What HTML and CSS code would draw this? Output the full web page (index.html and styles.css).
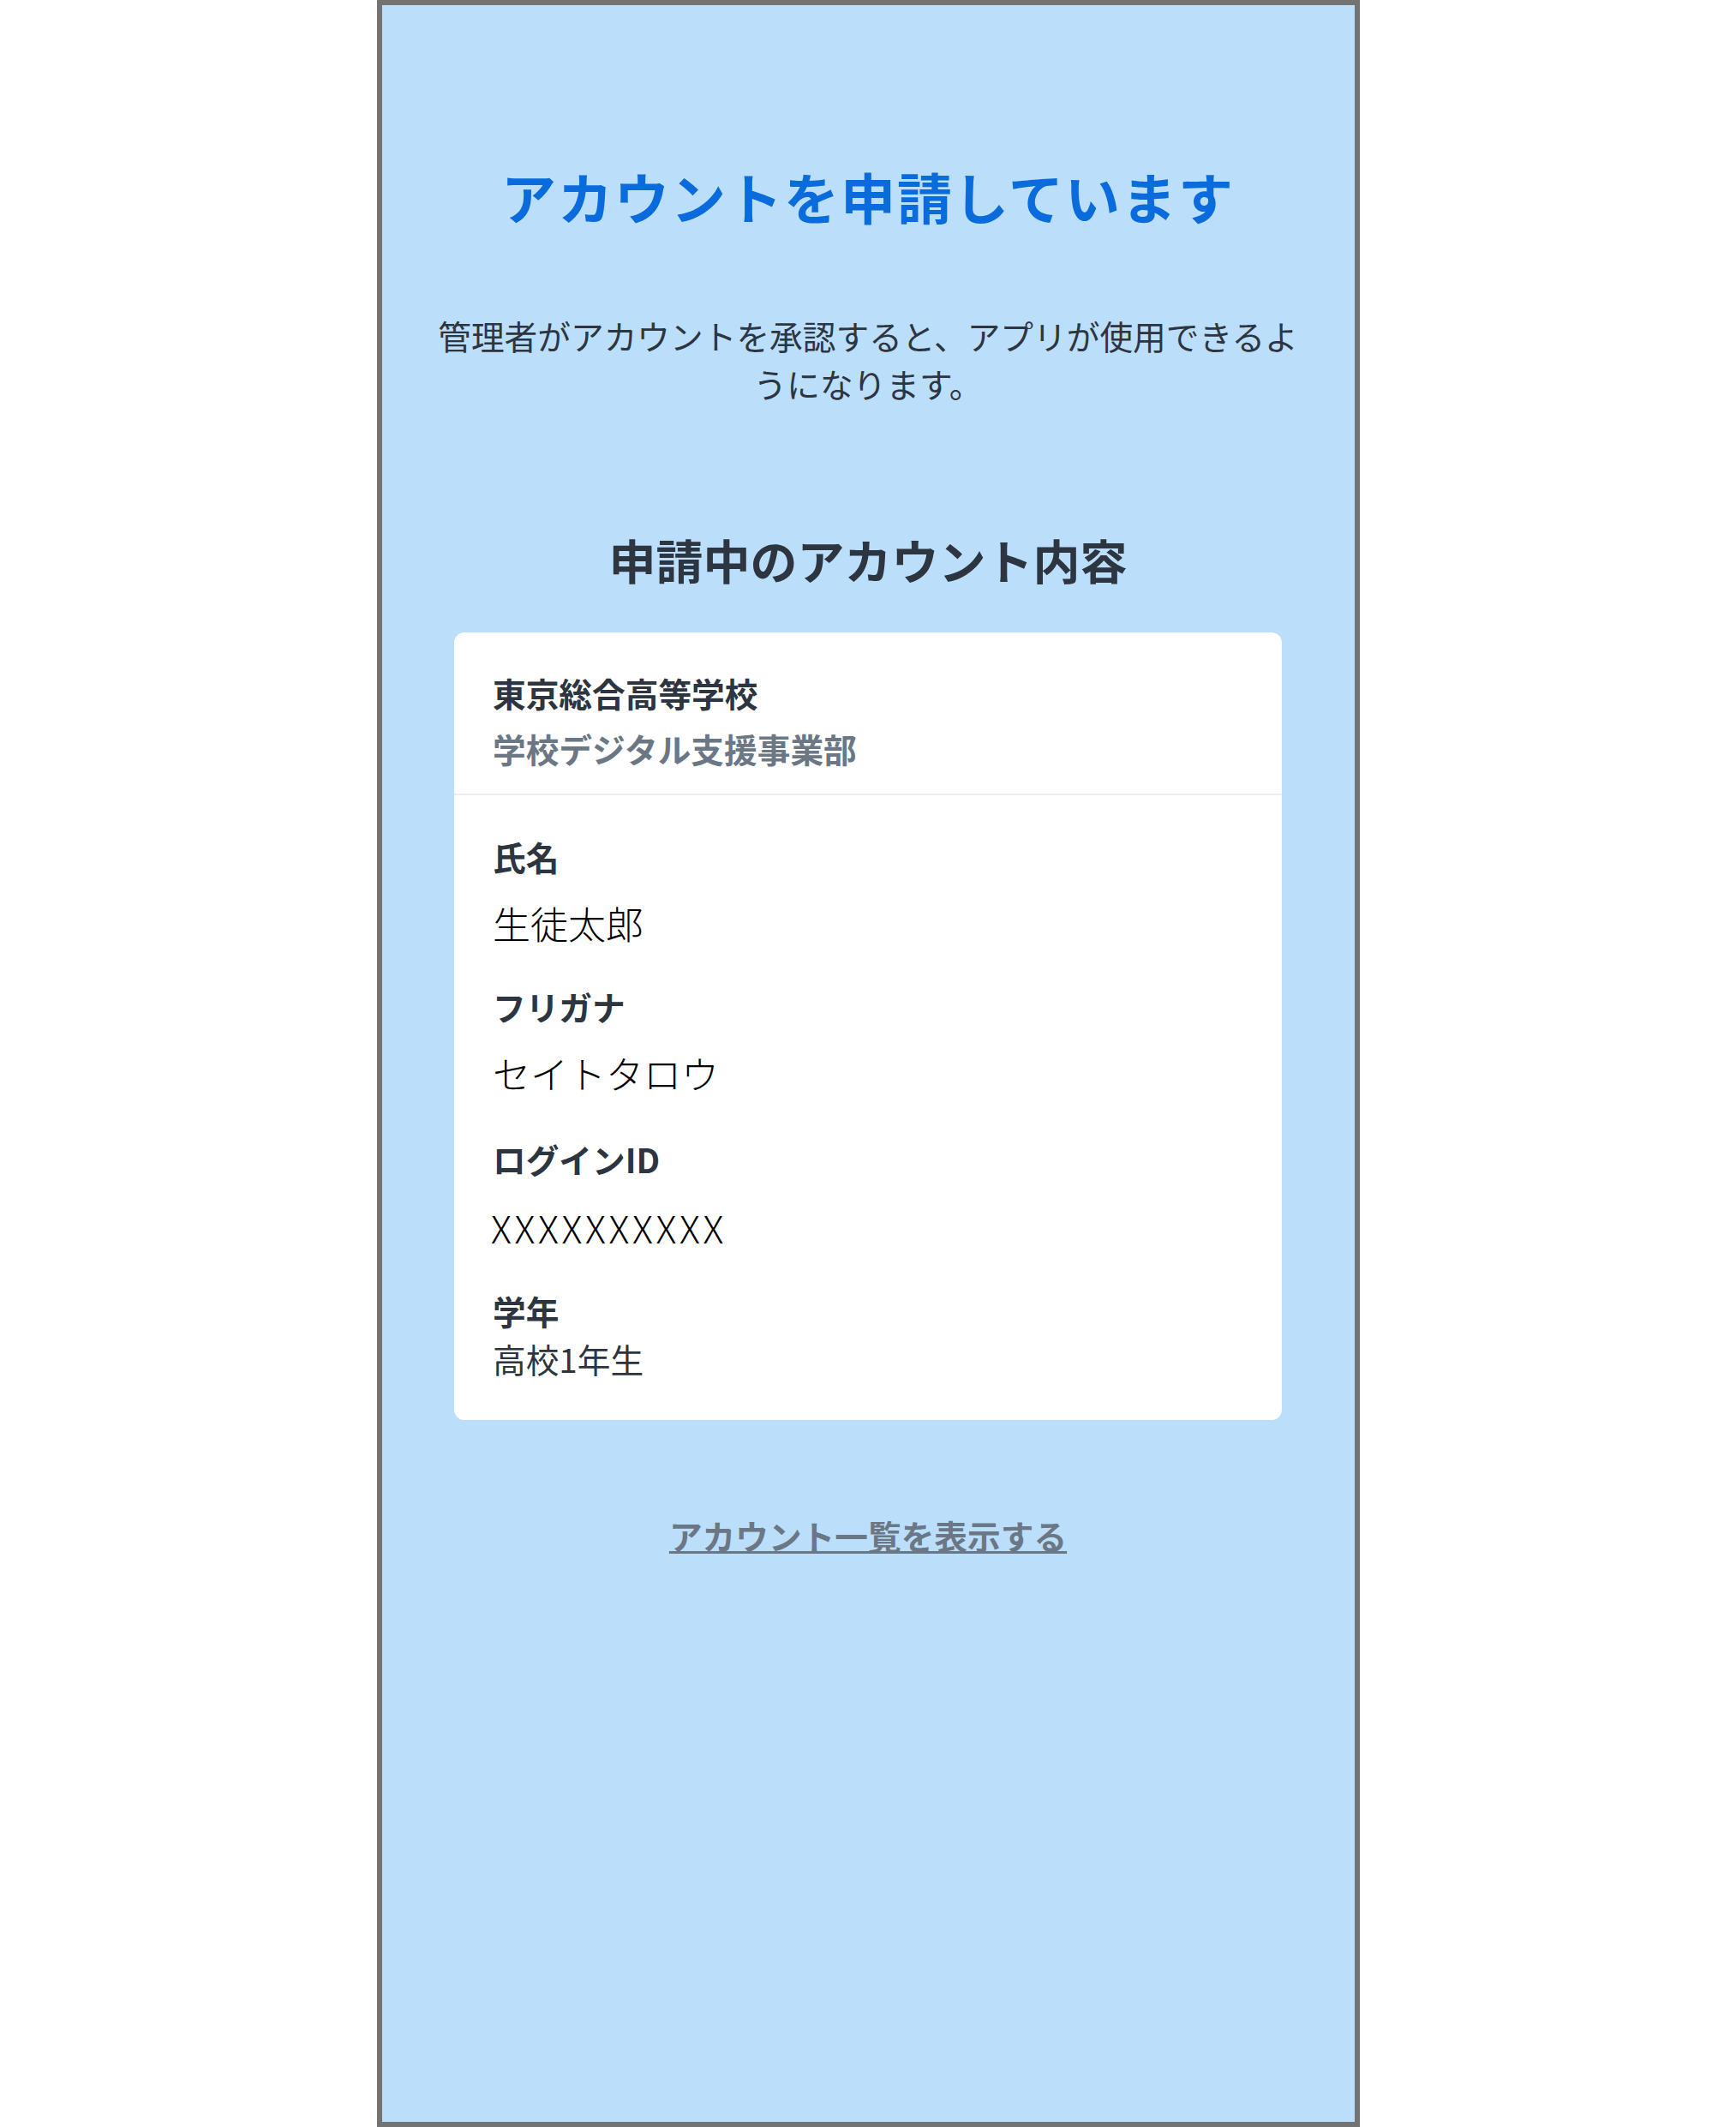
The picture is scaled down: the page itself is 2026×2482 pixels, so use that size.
FILE: index.html
```html
<!DOCTYPE html>
<html lang="ja">
<head>
    <meta charset="UTF-8">
    <meta name="viewport" content="width=device-width, initial-scale=1.0">
    <title>アカウントを申請しています</title>
    <link rel="stylesheet" href="styles.css">
</head>
<body>
    <div class="screen">
        <h1 class="title">アカウントを申請しています</h1>

        <p class="lead">管理者がアカウントを承認すると、アプリが使用できるようになります。</p>

        <h2 class="section-title">申請中のアカウント内容</h2>

        <div class="card">
            <div class="card-header">
                <div class="school">東京総合高等学校</div>
                <div class="org">学校デジタル支援事業部</div>
            </div>
            <div class="card-body">
                <div class="field">
                    <div class="label">氏名</div>
                    <div class="value">生徒太郎</div>
                </div>
                <div class="field">
                    <div class="label">フリガナ</div>
                    <div class="value">セイトタロウ</div>
                </div>
                <div class="field field-id">
                    <div class="label">ログインID</div>
                    <div class="value value-id">XXXXXXXXXX</div>
                </div>
                <div class="field">
                    <div class="label">学年</div>
                    <div class="value-plain">高校1年生</div>
                </div>
            </div>
        </div>

        <div class="links">
            <a href="#" class="list-link">アカウント一覧を表示する</a>
        </div>
    </div>
</body>
</html>
```

FILE: styles.css
```css
body {
    margin: 0;
    background-color: #fff;
    font-family: "Noto Sans CJK JP", "Noto Sans", sans-serif;
    color: #2d3540;
}

.screen {
    box-sizing: border-box;
    width: 1147px;
    height: 2482px;
    margin: 0 auto;
    padding: 176px 0 0;
    border: 6px solid #737373;
    background-color: #bbdefb;
}

.title {
    margin: 0;
    font-size: 64px;
    line-height: 92px;
    font-weight: 700;
    letter-spacing: 2px;
    text-align: center;
    color: #0a6cdc;
}

.lead {
    width: 1030px;
    margin: 89px auto 0;
    font-size: 38.7px;
    line-height: 56px;
    text-align: center;
    color: #2d3540;
}

.section-title {
    margin: 139px 0 0;
    font-size: 55px;
    line-height: 76px;
    font-weight: 700;
    text-align: center;
    color: #2d3540;
}

.card {
    width: 966px;
    margin: 48px auto 0;
    background-color: #fff;
    border-radius: 12px;
    overflow: hidden;
}

.card-header {
    padding: 43px 45px 26px;
    border-bottom: 2px solid #e9eef5;
}

.school {
    font-size: 38.7px;
    line-height: 54px;
    font-weight: 700;
    color: #2d3540;
}

.org {
    margin-top: 11px;
    font-size: 38.7px;
    line-height: 54px;
    font-weight: 700;
    color: #6b7785;
}

.card-body {
    padding: 44px 45px 45px;
}

.field + .field {
    margin-top: 39px;
}

.field + .field-id {
    margin-top: 42px;
}

.label {
    font-size: 38.7px;
    line-height: 54px;
    font-weight: 700;
    color: #2d3540;
}

.value {
    margin-top: 20px;
    font-size: 44px;
    line-height: 62px;
    font-weight: 300;
    color: #000;
}

.value-id {
    margin-top: 22px;
    margin-left: -2px;
    letter-spacing: 3.7px;
}

.value-plain {
    margin-top: 2px;
    font-size: 38.7px;
    line-height: 54px;
    color: #2d3540;
}

.links {
    margin-top: 107px;
    text-align: center;
}

.list-link {
    font-size: 38.7px;
    line-height: 54px;
    font-weight: 700;
    color: #6b7785;
    text-decoration: underline;
    text-decoration-thickness: 3px;
}
```
